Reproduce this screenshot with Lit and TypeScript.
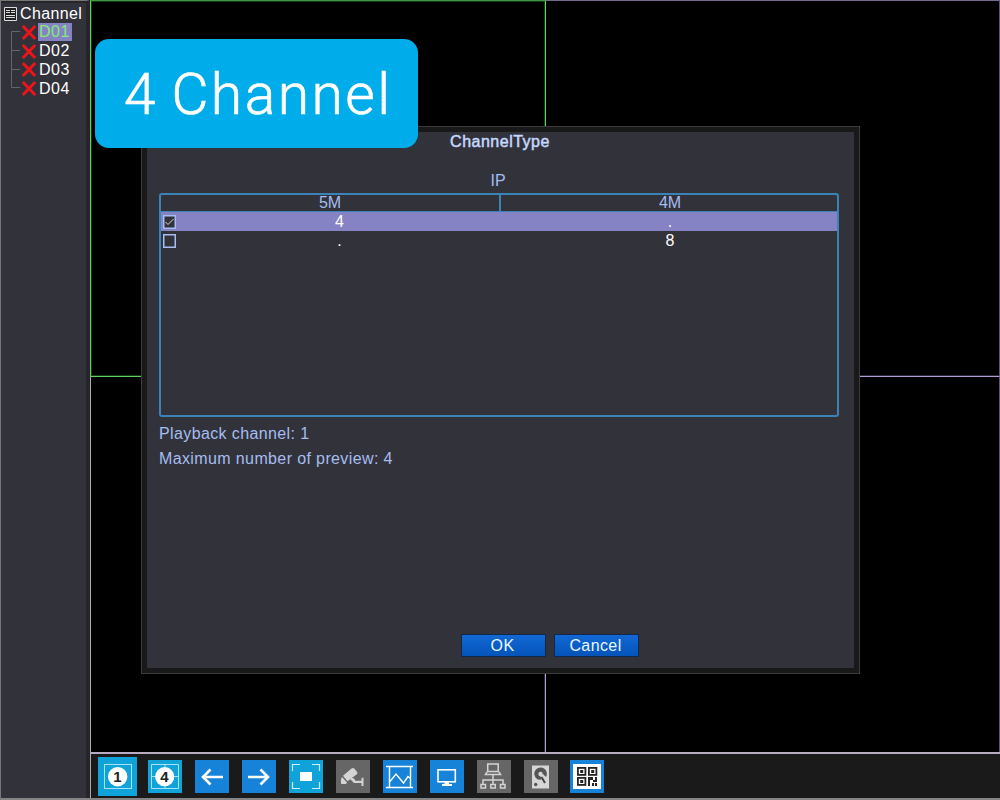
import { LitElement, html, css, svg } from "lit";
import { customElement, state } from "lit/decorators.js";

const icons: Record<string, unknown> = {
  one: svg`<rect width="39" height="39" fill="#10a3da"/><rect x="6.5" y="7.5" width="27" height="24" fill="none" stroke="#a5e4f7"/><circle cx="19.7" cy="19.7" r="9.7" fill="#fff"/><text x="19.5" y="24.6" class="num">1</text>`,
  four: svg`<rect width="34" height="33" fill="#10a3da"/><path d="M3.5 4.5h27v24h-27zM17 4v25M3 16.5h28" fill="none" stroke="#a5e4f7"/><circle cx="16.7" cy="16.7" r="9.6" fill="#fff"/><text x="16.5" y="21.7" class="num">4</text>`,
  left: svg`<rect width="34" height="33" fill="#1683d8"/><path d="M28 17H8M15.500 9.500L8 17l7.500 7.500" fill="none" stroke="#fff" stroke-width="2.6"/>`,
  right: svg`<rect width="34" height="33" fill="#1683d8"/><path d="M6 17h20M18.500 9.500L26 17l-7.500 7.500" fill="none" stroke="#fff" stroke-width="2.6"/>`,
  full: svg`<rect width="34" height="33" fill="#10a3da"/><path d="M3.5 11V4.500H11M23 4.500h7.500V11M30.500 22v6.500H23M11 28.500H3.500V22" fill="none" stroke="#c9f0fb" stroke-width="1.2"/><rect x="11" y="12" width="12" height="9" fill="#fff"/>`,
  camera: svg`<rect width="34" height="33" fill="#666"/><g fill="#d4d4d4"><path d="M15.500 8.500q1.500-1.200 3 .2l2.600 3.200q.9 1.600-.6 2.600l-9 6.800-4.500-5.500zM6 17l5 5.500-1 1.500H5.200L4.800 20z"/><path d="M15 17.500l3.500 1.200.7 2h6.300v-3h2V26h-2v-3h-7.500l-4-4z"/></g>`,
  chart: svg`<rect width="34" height="33" fill="#1683d8"/><path d="M3 6.500h27M3 27.500h27M6.500 6v22M27.500 6v22M7 21.500l6-7.500 7.500 9 4.500-6.500 2.500 2" fill="none" stroke="#fff" stroke-width="1.400"/>`,
  screen: svg`<rect width="34" height="33" fill="#1683d8"/><rect x="8" y="9.800" width="17.300" height="12" fill="none" stroke="#fff" stroke-width="1.600"/><path d="M14.500 22h4.500v2h3v2H12v-2h2.500z" fill="#fff"/>`,
  network: svg`<rect width="34" height="33" fill="#666"/><g fill="none" stroke="#d4d4d4" stroke-width="1.500"><rect x="10.700" y="4" width="10.500" height="7.500"/><path d="M10 12l-1.500 2.500h15L22 12M16 15v9M6 24v-4h20v4"/><rect x="4" y="24.500" width="4.500" height="3.500"/><rect x="13.800" y="24.500" width="4.500" height="3.500"/><rect x="23.500" y="24.500" width="4.500" height="3.500"/></g>`,
  disk: svg`<rect width="34" height="33" fill="#666"/><rect x="8" y="5.500" width="17" height="23" fill="#d6d6d6"/><path d="M11.500 17.500a6.300 6.300 0 1 1 10.500-.5l-3-3-2.600 2 1 3.500q-4 .8-5.900-2z" fill="#555"/><circle cx="16.500" cy="14" r="2.200" fill="#d6d6d6"/><path d="M17.500 17l3.500 6" stroke="#444" stroke-width="2"/><circle cx="11.700" cy="24.500" r="1.700" fill="#555"/>`,
  qr: svg`<rect width="34" height="33" fill="#1683d8"/><rect x="3" y="4" width="28" height="25" fill="#fff"/><g fill="none" stroke="#252525" stroke-width="1.800"><rect x="7.900" y="7.900" width="7.500" height="7"/><rect x="18.900" y="7.900" width="7.500" height="7"/><rect x="7.900" y="17.900" width="7.500" height="7"/></g><g fill="#252525"><rect x="10.200" y="10" width="3" height="3"/><rect x="21.200" y="10" width="3" height="3"/><rect x="10.200" y="20" width="3" height="3"/><path d="M18 17h5v3h2v-3h2v5h-4v-2h-3v6h-2zM22 23h2v3h-2zM25 23h2v3h-2z"/></g>`,
};

@customElement("app-root")
export class AppRoot extends LitElement {
  @state() private selected = 0;

  static styles = css`
    :host { display: block; }
    * { box-sizing: border-box; }
    .screen { position: relative; display: flex; width: 1000px; height: 800px; overflow: hidden; background: #000; border-left: 1px solid #777; border-bottom: 2px solid #858585; font: 16px/19px "Liberation Sans", Arial, sans-serif; color: #fff; }
    .side { width: 89px; flex: none; background: #32323a; border-right: 4px solid #25252a; border-top: 1px solid #777; padding: 3px 0 0 3px; box-shadow: inset 0 2px #25252a; }
    .title { display: flex; gap: 3px; align-items: center; height: 19px; letter-spacing: .35px; white-space: nowrap; }
    .title svg { flex: none; display: block; }
    .tree { display: flex; }
    .lines { flex: none; width: 18px; height: 76px; display: block; }
    .nodes { flex: 1; }
    .node { height: 18.75px; display: flex; align-items: center; gap: 2px; letter-spacing: .5px; }
    .node svg { flex: none; }
    .label { height: 18px; line-height: 18px; width: 34px; padding-left: 1px; }
    .current { background: #8583c3; color: #83ea78; }
    .main { flex: 1; display: flex; flex-direction: column; }
    .views { height: 752px; display: grid; grid-template-columns: 456px 1fr; grid-template-rows: 377px 1fr; }
    .v1 { border: 1px solid #60d060; border-top-color: #3f9a3f; box-shadow: inset 0 0 0 1px #123c12; }
    .v2 { border-top: 1px solid #76688c; border-bottom: 1px solid #b39cd2; border-right: 1px solid #65527c; box-shadow: inset 0 -1px #2d253a; }
    .v3 { border-right: 1px solid #b39cd2; border-left: 1px solid #aaa; box-shadow: inset -1px 0 #2d253a; }
    .v4 { border-right: 1px solid #65527c; }
    .bar { flex: 1; background: #1a1a1a; border-top: 2px solid #b8adc0; border-left: 1px solid #aaa; padding: 3px 0 0 7px; display: flex; gap: 12.900px; align-items: flex-start; }
    .tool { display: block; width: 34px; height: 33px; margin-top: 3px; flex: none; }
    .big { width: 39px; height: 39px; margin-top: 0; margin-right: -1.500px; }
    .num { font: bold 15px "Liberation Sans", sans-serif; text-anchor: middle; fill: #222; }
    .dialog { position: absolute; left: 140px; top: 126px; width: 719px; height: 548px; background: #32323a; border: 1px solid #3c3c3c; outline: 5px solid #191919; outline-offset: -6px; padding: 5px 18px 0 17px; color: #a5bdf0; display: flex; flex-direction: column; }
    .heading { height: 19px; text-align: center; color: #c4d8ff; -webkit-text-stroke: .5px #c4d8ff; letter-spacing: .5px; }
    .group { height: 19px; margin-top: 20px; text-align: center; padding-right: 4px; }
    .table { margin-top: 3px; width: 680px; height: 224px; border: 2px solid #3b83b7; border-radius: 3px; }
    .row { display: grid; grid-template-columns: 340px 1fr; height: 19px; line-height: 19px; text-align: center; color: #fff; }
    .row > :last-child { padding-left: 2px; }
    .head { height: 17px; line-height: 16px; color: #a5bdf0; border-bottom: 1px solid #3b83b7; }
    .head .cell:first-child { border-right: 2px solid #3b83b7; }
    .rest { display: flex; align-items: center; }
    .row .value { flex: 1; padding-left: 2px; }
    .check { width: 13px; height: 14px; margin-left: 2px; flex: none; display: block; }
    .sel { background: #8583c3; }
    .notes { margin-top: 4px; line-height: 25px; letter-spacing: .38px; }
    .actions { margin: auto 0 16px 302px; display: flex; gap: 8px; }
    .button { width: 85px; height: 23px; padding: 0 2px 0 0; border: 1px solid #10284b; background: linear-gradient(#1268d4, #0454b9); color: #e9f8ff; font: inherit; line-height: 20px; letter-spacing: .4px; }
    .banner { position: absolute; left: 94px; top: 39px; width: 323px; height: 109px; border-radius: 14px; background: #00adea; color: #fff; font: 300 57px/111px Roboto, sans-serif; letter-spacing: 2.450px; word-spacing: -3px; padding-left: 29px; white-space: nowrap; -webkit-text-stroke: .6px #fff; }
  `;

  private row(i: number, a: string, b: string) {
    const on = this.selected === i;
    return html`<div class="row ${on ? "sel" : ""}" @click=${() => (this.selected = i)}>
      <div class="rest"><svg class="check" viewBox="0 0 13 14"><rect x=".75" y=".75" width="11.500" height="12.500" fill="#32323a" stroke="#a5bdf0" stroke-width="1.500"/>${on ? svg`<path d="M2.500 7l2.500 2.500L10.500 4" fill="none" stroke="#ddd"/>` : ""}</svg><div class="value">${a}</div></div>
      <div>${b}</div></div>`;
  }

  render() {
    return html`<div class="screen">
      <div class="side">
        <div class="title"><svg width="13" height="14" viewBox="0 0 13 14"><path d="M.500 .500h12v13H.500z" fill="#222" stroke="#ddd"/><path d="M2 3.500h4M2 5.500h4M7 3.500h4M7 5.500h4M2 8.500h9M2 10.500h9" stroke="#ddd"/></svg><span>Channel</span></div>
        <div class="tree">
          <svg class="lines"><path d="M16 8.500H7.500v56H16M8 27.500h8M8 46.500h8" fill="none" stroke="#61666b"/></svg>
          <div class="nodes">${["D01", "D02", "D03", "D04"].map((n, i) => html`<div class="node"><svg width="14" height="15" viewBox="0 0 14 15"><path d="M.800 1l12.400 13M13.200 1L.800 14" stroke="#f0141a" stroke-width="2.900"/></svg><span class="label ${i === 0 ? "current" : ""}">${n}</span></div>`)}</div>
        </div>
      </div>
      <div class="main">
        <div class="views"><div class="v1"></div><div class="v2"></div><div class="v3"></div><div class="v4"></div></div>
        <div class="bar">${Object.entries(icons).map(([k, g]) => html`<svg class="tool ${k === "one" ? "big" : ""}" viewBox=${k === "one" ? "0 0 39 39" : "0 0 34 33"}>${g}</svg>`)}</div>
      </div>
      <div class="dialog">
        <div class="heading">ChannelType</div>
        <div class="group">IP</div>
        <div class="table">
          <div class="row head"><div class="cell">5M</div><div class="cell">4M</div></div>
          ${this.row(0, "4", ".")}${this.row(1, ".", "8")}
        </div>
        <div class="notes"><div>Playback channel: 1</div><div>Maximum number of preview: 4</div></div>
        <div class="actions"><button class="button">OK</button><button class="button">Cancel</button></div>
      </div>
      <div class="banner">4 Channel</div>
    </div>`;
  }
}
